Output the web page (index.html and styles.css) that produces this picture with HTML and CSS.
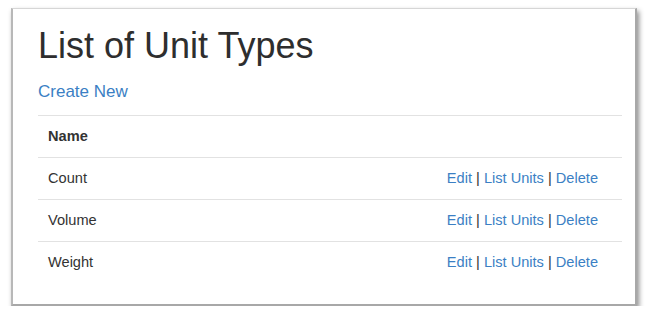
FILE: index.html
```html
<!DOCTYPE html>
<html lang="en">
<head>
    <meta charset="UTF-8">
    <meta name="viewport" content="width=device-width, initial-scale=1.0">
    <title>Unit Types</title>
    <link rel="stylesheet" href="styles.css">
</head>
<body>
    <div class="card">
        <h1>List of Unit Types</h1>
        <p class="create"><a href="#">Create New</a></p>
        <table class="table">
            <thead>
                <tr>
                    <th>Name</th>
                    <th></th>
                </tr>
            </thead>
            <tbody>
                <tr>
                    <td>Count</td>
                    <td class="actions"><a href="#">Edit</a> | <a href="#">List Units</a> | <a href="#">Delete</a></td>
                </tr>
                <tr>
                    <td>Volume</td>
                    <td class="actions"><a href="#">Edit</a> | <a href="#">List Units</a> | <a href="#">Delete</a></td>
                </tr>
                <tr>
                    <td>Weight</td>
                    <td class="actions"><a href="#">Edit</a> | <a href="#">List Units</a> | <a href="#">Delete</a></td>
                </tr>
            </tbody>
        </table>
    </div>
</body>
</html>
```

FILE: styles.css
```css
*{
    margin: 0px;
    padding: 0px;
    box-sizing: border-box;
}

body{
    background-color: white;
    font-family: "Liberation Sans", Arial, sans-serif;
    color: #333;
    padding: 8px 0 0 11px;
}

.card{
    width: 626px;
    height: 298px;
    background-color: white;
    border: 1px solid #d6d6d6;
    border-left: 2px solid #b8b8b8;
    border-right: 2px solid #a8a8a8;
    border-bottom: 2px solid #a8a8a8;
    box-shadow: 2px 3px 5px rgba(0, 0, 0, 0.45);
    padding: 17px 13px 0 25px;
}

h1{
    font-size: 36px;
    font-weight: normal;
    line-height: 1.1;
    color: #2e2e2e;
    margin-bottom: 14px;
}

a{
    color: #3b7fc4;
    text-decoration: none;
}

.create{
    font-size: 17px;
    line-height: 24px;
    margin-bottom: 11px;
}

.table{
    width: 100%;
    border-collapse: collapse;
    font-size: 14.6px;
}

.table th,
.table td{
    text-align: left;
    padding: 10px 10px;
    line-height: 21px;
    border-top: 1px solid #e2e2e2;
}

.table th{
    font-weight: bold;
}

.table .actions{
    text-align: right;
    padding-right: 24px;
}
```
